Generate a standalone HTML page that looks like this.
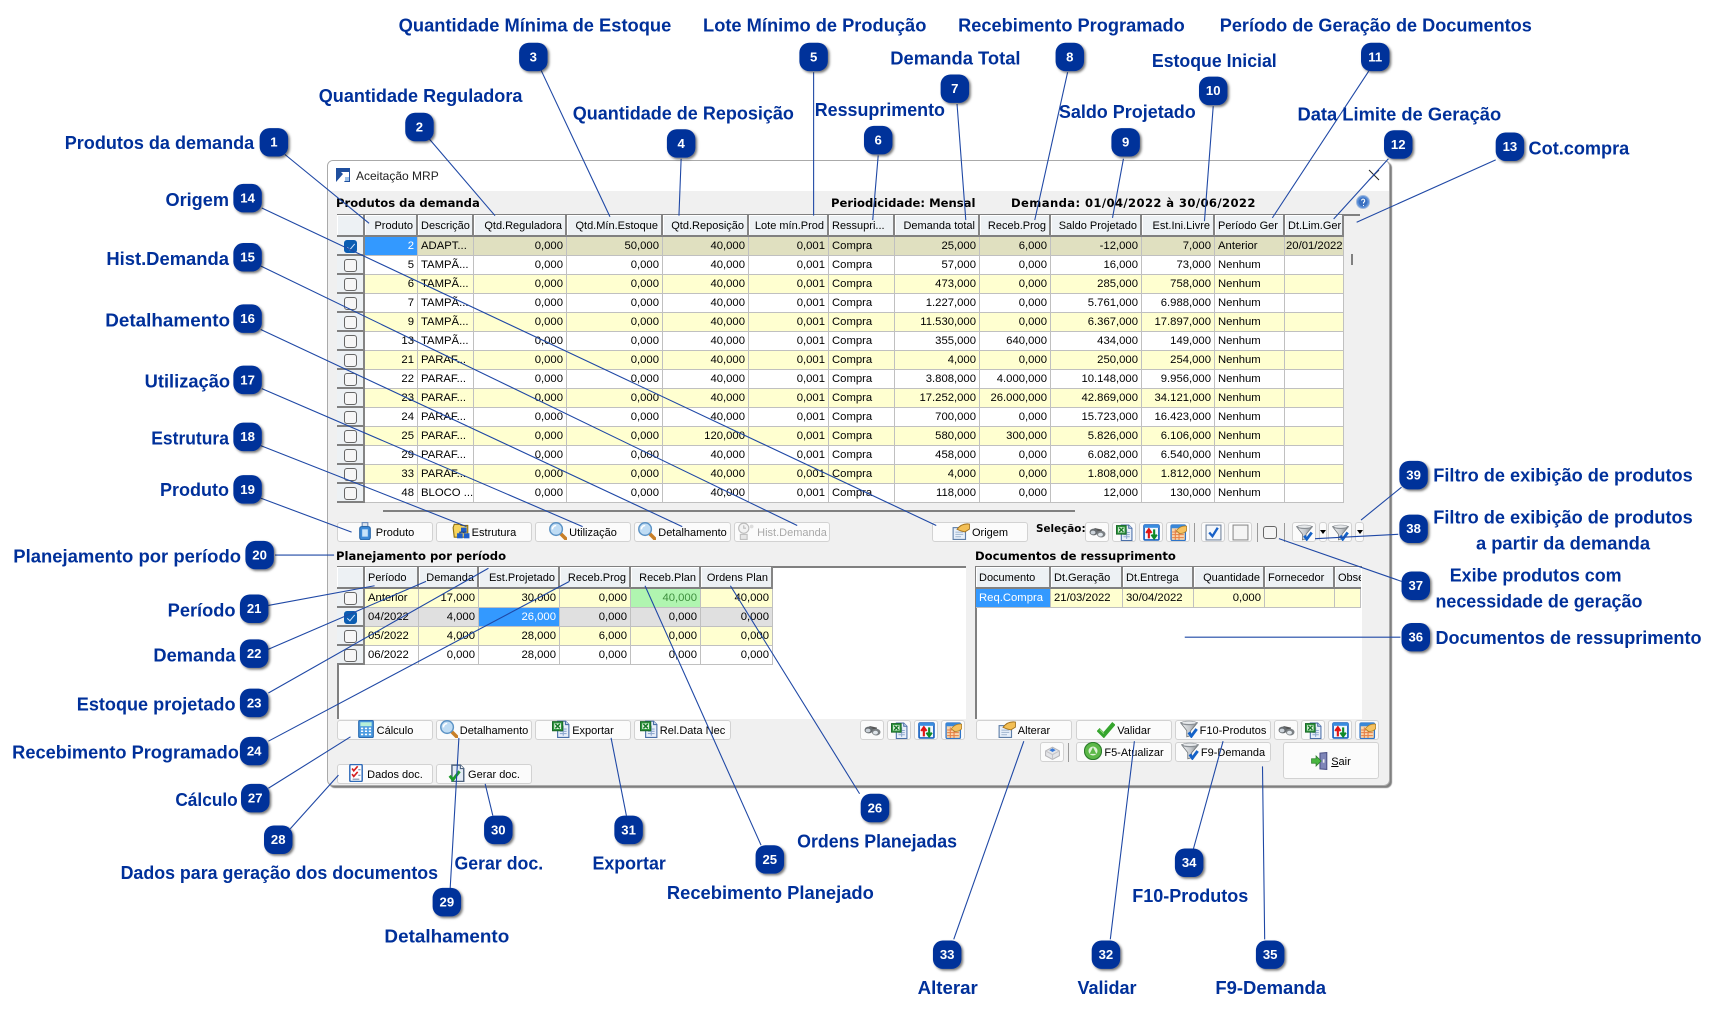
<!DOCTYPE html>
<html lang="pt">
<head>
<meta charset="utf-8">
<title>Aceitação MRP</title>
<style>
html,body{margin:0;padding:0;background:#fff;width:1717px;height:1016px;overflow:hidden}
*{box-sizing:border-box}
body{font-family:"Liberation Sans",sans-serif;font-size:11.3px;color:#000;position:relative}
#win{position:absolute;left:327px;top:160px;width:1063px;height:626px;background:#f0f0f0;border:1px solid #aaa;border-radius:6px;box-shadow:2px 2px 1px #808080;overflow:hidden}
#titlebar{position:absolute;left:0;top:0;width:100%;height:30px;background:#fff}
.abs{position:absolute}
.h{position:absolute;font-family:"DejaVu Sans",sans-serif;font-weight:bold;font-size:11.6px;white-space:nowrap;line-height:14px}
table{position:absolute;border-collapse:separate;border-spacing:0;table-layout:fixed}
th,td{padding:0 3px;font-weight:normal;white-space:nowrap;overflow:hidden;border-right:1px solid #c0c0c0;border-bottom:1px solid #c0c0c0;text-align:left;font-size:11.3px}
th{background:#edf1f4;border-right:2px solid #858585;border-bottom:2px solid #808080;box-shadow:inset 1px 1px #fff;height:22px;padding:1px 3px 0;font-size:11px}
td{height:19px;line-height:17px;padding-top:1px}
.r{text-align:right}
.y td{background:#ffffd0}
.w td{background:#fff}
.s td{background:#e0e0c0}
.g td{background:#e0e0e0}
td.c,td.c:first-child{background:#edf1f4;border-right:2px solid #858585;border-bottom:2px solid #808080;padding:0;text-align:center}
td.b,.s td.b,.g td.b{background:#3399ff;color:#fff}
td.pl{background:#b0f5b0;color:#3d8f3d}
.k{display:block;width:13px;height:13px;margin:1px auto 0;border:1px solid #666;border-radius:3px;background:#f6f6f6;position:relative}
.k.on{background:#0b5db2;border-color:#0b5db2}
.k.on::after{content:"";position:absolute;left:4px;top:1px;width:3px;height:7px;border:solid #cfe3ff;border-width:0 1px 1px 0;transform:rotate(40deg)}
.p{position:absolute;background:#fff}
.bt{position:absolute;height:20px;background:#fbfbfb;border:1px solid #d2d2d2;border-radius:3px;display:flex;align-items:center;justify-content:center;gap:2px;font-size:11px;white-space:nowrap;color:#000;padding-top:2px}
.bt svg{width:18px;height:18px;flex:none;margin-top:-5px;overflow:visible}
.ib{padding-top:0}
.ib svg{width:17px;height:17px;margin-top:0}
.dis{color:#a8a8a8}
.sep{position:absolute;width:1px;height:19px;background:#9a9a9a}
</style>
</head>
<body>
<svg width="0" height="0" style="position:absolute">
<defs>
<linearGradient id="sv" x1="0" x2="1" y1="0" y2="0"><stop offset="0" stop-color="#f2f3f4"/><stop offset=".55" stop-color="#c4c8cc"/><stop offset="1" stop-color="#7f8488"/></linearGradient>
<symbol id="bin" viewBox="0 0 16 16"><path d="M5 5l7 1.500" stroke="#555" stroke-width="2.500"/><ellipse cx="4.500" cy="7.500" rx="4" ry="3.200" fill="#676c70"/><ellipse cx="11.500" cy="9.500" rx="4" ry="3.200" fill="#7b8084"/><ellipse cx="3.800" cy="8" rx="2.300" ry="1.800" fill="#ccd3da"/><ellipse cx="10.800" cy="10" rx="2.300" ry="1.800" fill="#dfe5ea"/></symbol>
<symbol id="xl" viewBox="0 0 16 16"><path d="M5 1h7l3 3v11.500H5z" fill="#e8effa" stroke="#4a6fa8"/><path d="M7 8h6M7 10h6M7 12h6M10 5v9" stroke="#8ea9d0"/><path d="M12 1v3h3" fill="#cfdcf0" stroke="#4a6fa8"/><rect x="0.500" y="1.500" width="9" height="8" fill="#2f9a3f" stroke="#1c6a2a"/><rect x="2" y="3" width="6" height="5" fill="#e6f3e4"/><path d="M3 3.500l4 4M7 3.500l-4 4" stroke="#177a28" stroke-width="1.300"/></symbol>
<symbol id="ud" viewBox="0 0 16 16"><rect x="1" y="1" width="14" height="14" rx="1" fill="#f2f8ff" stroke="#1a62c0" stroke-width="1.600"/><rect x="1" y="1" width="14" height="2.600" fill="#3a8ee0"/><path d="M5.500 13.500V6M3 8.500l2.500-3.500 2.500 3.500" stroke="#e01414" stroke-width="2" fill="none"/><path d="M10.500 5v8M8 10l2.500 3.500L13 10" stroke="#0f8a28" stroke-width="2" fill="none"/></symbol>
<symbol id="tbl" viewBox="0 0 16 16"><rect x="1" y="1" width="13.500" height="14.500" rx="1" fill="#f8d6ad" stroke="#2e74c8" stroke-width="1.200"/><rect x="1" y="1" width="13.500" height="3" fill="#3a88d8"/><path d="M2 7.500h11M2 10h11M2 12.800h11M5 5v10M8.500 5v10" stroke="#e67f45"/><path d="M6 6.500c2-3.500 6-5 9.700-4.500v4.500l-3 2-3.500 0.500z" fill="#f6c260" stroke="#a87a22" stroke-width=".7"/></symbol>
<symbol id="fn" viewBox="0 0 16 16"><path d="M0.500 2.500L6 9.500V15l3.500-1V9.500L15.500 2.500z" fill="url(#sv)" stroke="#6f7478" stroke-width=".7"/><ellipse cx="8" cy="2.700" rx="7.500" ry="2" fill="#8a8f94"/><ellipse cx="8" cy="2.400" rx="6" ry="1.200" fill="#e8eaec"/><path d="M7.800 11l2.300 3.300 4.700-6.300" stroke="#1462c8" stroke-width="2.600" fill="none"/></symbol>
<symbol id="mag" viewBox="0 0 16 16"><path d="M10 10l5 5" stroke="#c87f28" stroke-width="3.200" stroke-linecap="round"/><circle cx="6.300" cy="6.300" r="5.600" fill="#bfdcf4" stroke="#5d93c5" stroke-width="1.300"/><path d="M3 6.500a3.400 3.400 0 0 1 3.400-3.400" stroke="#fff" stroke-width="1.400" fill="none"/></symbol>
<symbol id="prod" viewBox="0 0 16 16"><rect x="5.500" y="0.500" width="5" height="3.500" fill="#dfe6ee" stroke="#6f8db8"/><rect x="3.300" y="4" width="9.400" height="11.800" rx="2" fill="#3c8ad8" stroke="#2766a8"/><rect x="5.500" y="6.500" width="5" height="6.500" fill="#c8e4fa"/></symbol>
<symbol id="est" viewBox="0 0 16 16"><path d="M1 5l1-3h5l1 1h6v10.500H2z" fill="#f6d45e" stroke="#8f7010"/><rect x="8" y="5" width="5" height="4" fill="#1f5ec8"/><rect x="4.500" y="10" width="5" height="4.500" fill="#1f5ec8"/><rect x="10.500" y="10" width="5" height="4.500" fill="#1f5ec8"/><path d="M10.500 9v1M7 10V9h6" stroke="#123c88" fill="none"/></symbol>
<symbol id="hand" viewBox="0 0 16 16"><rect x="1" y="5" width="11" height="10.500" fill="#e8f0fa" stroke="#5f7fa8"/><path d="M3 9h7M3 11h7M3 13h5" stroke="#a8bcd4"/><path d="M4.500 6.500C7 3 11 1.200 15.500 1.800v4.500l-4 2.500-3.500-.8z" fill="#f3bf55" stroke="#a0701c" stroke-width=".8"/></symbol>
<symbol id="hist" viewBox="0 0 16 16"><circle cx="6" cy="5.500" r="4.500" fill="#f2f2f2" stroke="#bbb"/><path d="M6 3v2.500h2" stroke="#bbb" fill="none"/><path d="M3 11h6v4.500H3z" fill="#e6e6e6" stroke="#c0c0c0"/><circle cx="13" cy="4" r="1.700" fill="#ddd"/></symbol>
<symbol id="calc" viewBox="0 0 16 16"><rect x="1.500" y="0.500" width="13" height="15" rx="1" fill="#4a9ae0" stroke="#2a6ab0"/><rect x="3" y="2" width="10" height="3.500" fill="#b8f0d8"/><path d="M3.500 7.500h2M7 7.500h2M10.500 7.500h2M3.500 10h2M7 10h2M10.500 10h2M3.500 12.800h2M7 12.800h2M10.500 12.800h2" stroke="#fff" stroke-width="1.400"/></symbol>
<symbol id="dados" viewBox="0 0 16 16"><rect x="2.500" y="0.500" width="11" height="15" rx="1" fill="#fff" stroke="#2f6ab8" stroke-width="1.300"/><path d="M4.500 4l1.500 2 3.500-4M4.500 9l1.500 2 3.500-4" stroke="#d42020" stroke-width="1.500" fill="none"/><path d="M10 5h2M10 10h2M5 13.500h6" stroke="#7a8ea8"/></symbol>
<symbol id="gerar" viewBox="0 0 16 16"><path d="M3.500 1h7.500l3 3v11.500H3.500z" fill="#e4ebf4" stroke="#4f6480" stroke-width="1.300"/><path d="M11 1v3h3" fill="#fff" stroke="#4f6480"/><path d="M1.500 10.500l2.800 3.500 6-7.500" stroke="#1c9a2a" stroke-width="2.500" fill="none"/></symbol>
<symbol id="chk" viewBox="0 0 16 16"><path d="M1 8.500l5 5L15 3" stroke="#35a52e" stroke-width="3.800" fill="none"/><path d="M2.500 8.500l3.500 3.500" stroke="#8fd87a" fill="none"/></symbol>
<symbol id="rec" viewBox="0 0 16 16"><circle cx="8" cy="8" r="7.600" fill="#5cb848" stroke="#2c7d2c"/><circle cx="8" cy="8" r="4" fill="#dff2d6"/><path d="M8 4.500L11 10.500H5z" fill="#5cb848"/></symbol>
<symbol id="sair" viewBox="0 0 16 16"><path d="M8 1l6-0.500v15L8 15z" fill="#7f86b8" stroke="#4e5488"/><rect x="10.500" y="6.500" width="1.500" height="3" fill="#eee"/><path d="M0.500 6h4V3.500L9 8l-4.500 4.500V10h-4z" fill="#49b640" stroke="#2c7d2c" stroke-width="0.700"/></symbol>
<symbol id="box" viewBox="0 0 16 16"><path d="M1.500 6.500L8 3l6.500 3.500v4.500L8 14.500 1.500 11z" fill="#e4e5e8" stroke="#b4b4b8"/><path d="M1.500 6.500L8 10l6.500-3.500M8 10v4.500" stroke="#c4c4c8" fill="none"/><path d="M5 5.800L8 4l3 1.800L8 7.500z" fill="#3a7ad8"/></symbol>
<symbol id="vk" viewBox="0 0 16 16"><rect x="1" y="1" width="14" height="14" fill="#f4f7fb" stroke="#70839c"/><path d="M4 8l3 3.500 5-8" stroke="#1660c8" stroke-width="2.200" fill="none"/></symbol>
<symbol id="ev" viewBox="0 0 16 16"><rect x="1" y="1" width="14" height="14" fill="#f4f4f4" stroke="#8a8a8a"/></symbol>
</defs>
</svg>

<div id="win">
<div id="titlebar"></div>
</div>

<svg class="abs" style="left:336px;top:168px" width="14" height="14" viewBox="0 0 14 14"><rect width="14" height="14" fill="#1f4f9e"/><path d="M0 14L7 6 5 4h8v8l-2-2-3 4z" fill="#fff"/><rect x="9" y="9" width="4" height="4" fill="#9cc0e8"/></svg>
<div class="abs" style="left:356px;top:169px;font-size:12px;line-height:15px;white-space:nowrap;color:#222">Aceitação MRP</div>

<svg class="abs" style="left:1368px;top:169px" width="12" height="12" viewBox="0 0 12 12"><path d="M1 1l10 10M11 1L1 11" stroke="#222" stroke-width="1"/></svg>
<svg class="abs" style="left:1356px;top:195px" width="14" height="14" viewBox="0 0 14 14"><circle cx="7" cy="7" r="6.500" fill="#5b8fd8" stroke="#9fb8dc"/><circle cx="7" cy="7" r="4.500" fill="#3a70c0"/><path d="M5.500 5.500a1.600 1.600 0 1 1 2 1.800V8.500M7.500 10v1" stroke="#fff" fill="none"/></svg>

<div class="h" style="left:336px;top:196px">Produtos da demanda</div>
<div class="h" style="left:831px;top:196px">Periodicidade: Mensal</div>
<div class="h" style="left:1011px;top:196px;letter-spacing:.39px">Demanda: 01/04/2022 à 30/06/2022</div>

<div class="abs" style="left:337px;top:214px;width:1023px;height:2px;background:#808080"></div>
<div class="abs" style="left:337px;top:214px;width:2px;height:288px;background:#808080"></div>

<table style="left:337px;top:215px;width:1007px">
<colgroup><col style="width:28px"><col style="width:53px"><col style="width:56px"><col style="width:93px"><col style="width:96px"><col style="width:86px"><col style="width:80px"><col style="width:66px"><col style="width:85px"><col style="width:71px"><col style="width:91px"><col style="width:73px"><col style="width:70px"><col style="width:59px"></colgroup>
<tr><th></th><th class="r">Produto</th><th>Descrição</th><th class="r">Qtd.Reguladora</th><th class="r">Qtd.Mín.Estoque</th><th class="r">Qtd.Reposição</th><th class="r">Lote mín.Prod</th><th>Ressupri...</th><th class="r">Demanda total</th><th class="r">Receb.Prog</th><th class="r">Saldo Projetado</th><th class="r">Est.Ini.Livre</th><th>Período Ger</th><th>Dt.Lim.Ger</th></tr>
<tr class="s"><td class="c"><span class="k on"></span></td><td class="r b">2</td><td>ADAPT...</td><td class="r">0,000</td><td class="r">50,000</td><td class="r">40,000</td><td class="r">0,001</td><td>Compra</td><td class="r">25,000</td><td class="r">6,000</td><td class="r">-12,000</td><td class="r">7,000</td><td>Anterior</td><td style="padding:1px 0 0 1px">20/01/2022</td></tr>
<tr class="w"><td class="c"><span class="k"></span></td><td class="r">5</td><td>TAMPÃ...</td><td class="r">0,000</td><td class="r">0,000</td><td class="r">40,000</td><td class="r">0,001</td><td>Compra</td><td class="r">57,000</td><td class="r">0,000</td><td class="r">16,000</td><td class="r">73,000</td><td>Nenhum</td><td></td></tr>
<tr class="y"><td class="c"><span class="k"></span></td><td class="r">6</td><td>TAMPÃ...</td><td class="r">0,000</td><td class="r">0,000</td><td class="r">40,000</td><td class="r">0,001</td><td>Compra</td><td class="r">473,000</td><td class="r">0,000</td><td class="r">285,000</td><td class="r">758,000</td><td>Nenhum</td><td></td></tr>
<tr class="w"><td class="c"><span class="k"></span></td><td class="r">7</td><td>TAMPÃ...</td><td class="r">0,000</td><td class="r">0,000</td><td class="r">40,000</td><td class="r">0,001</td><td>Compra</td><td class="r">1.227,000</td><td class="r">0,000</td><td class="r">5.761,000</td><td class="r">6.988,000</td><td>Nenhum</td><td></td></tr>
<tr class="y"><td class="c"><span class="k"></span></td><td class="r">9</td><td>TAMPÃ...</td><td class="r">0,000</td><td class="r">0,000</td><td class="r">40,000</td><td class="r">0,001</td><td>Compra</td><td class="r">11.530,000</td><td class="r">0,000</td><td class="r">6.367,000</td><td class="r">17.897,000</td><td>Nenhum</td><td></td></tr>
<tr class="w"><td class="c"><span class="k"></span></td><td class="r">13</td><td>TAMPÃ...</td><td class="r">0,000</td><td class="r">0,000</td><td class="r">40,000</td><td class="r">0,001</td><td>Compra</td><td class="r">355,000</td><td class="r">640,000</td><td class="r">434,000</td><td class="r">149,000</td><td>Nenhum</td><td></td></tr>
<tr class="y"><td class="c"><span class="k"></span></td><td class="r">21</td><td>PARAF...</td><td class="r">0,000</td><td class="r">0,000</td><td class="r">40,000</td><td class="r">0,001</td><td>Compra</td><td class="r">4,000</td><td class="r">0,000</td><td class="r">250,000</td><td class="r">254,000</td><td>Nenhum</td><td></td></tr>
<tr class="w"><td class="c"><span class="k"></span></td><td class="r">22</td><td>PARAF...</td><td class="r">0,000</td><td class="r">0,000</td><td class="r">40,000</td><td class="r">0,001</td><td>Compra</td><td class="r">3.808,000</td><td class="r">4.000,000</td><td class="r">10.148,000</td><td class="r">9.956,000</td><td>Nenhum</td><td></td></tr>
<tr class="y"><td class="c"><span class="k"></span></td><td class="r">23</td><td>PARAF...</td><td class="r">0,000</td><td class="r">0,000</td><td class="r">40,000</td><td class="r">0,001</td><td>Compra</td><td class="r">17.252,000</td><td class="r">26.000,000</td><td class="r">42.869,000</td><td class="r">34.121,000</td><td>Nenhum</td><td></td></tr>
<tr class="w"><td class="c"><span class="k"></span></td><td class="r">24</td><td>PARAF...</td><td class="r">0,000</td><td class="r">0,000</td><td class="r">40,000</td><td class="r">0,001</td><td>Compra</td><td class="r">700,000</td><td class="r">0,000</td><td class="r">15.723,000</td><td class="r">16.423,000</td><td>Nenhum</td><td></td></tr>
<tr class="y"><td class="c"><span class="k"></span></td><td class="r">25</td><td>PARAF...</td><td class="r">0,000</td><td class="r">0,000</td><td class="r">120,000</td><td class="r">0,001</td><td>Compra</td><td class="r">580,000</td><td class="r">300,000</td><td class="r">5.826,000</td><td class="r">6.106,000</td><td>Nenhum</td><td></td></tr>
<tr class="w"><td class="c"><span class="k"></span></td><td class="r">29</td><td>PARAF...</td><td class="r">0,000</td><td class="r">0,000</td><td class="r">40,000</td><td class="r">0,001</td><td>Compra</td><td class="r">458,000</td><td class="r">0,000</td><td class="r">6.082,000</td><td class="r">6.540,000</td><td>Nenhum</td><td></td></tr>
<tr class="y"><td class="c"><span class="k"></span></td><td class="r">33</td><td>PARAF...</td><td class="r">0,000</td><td class="r">0,000</td><td class="r">40,000</td><td class="r">0,001</td><td>Compra</td><td class="r">4,000</td><td class="r">0,000</td><td class="r">1.808,000</td><td class="r">1.812,000</td><td>Nenhum</td><td></td></tr>
<tr class="w"><td class="c"><span class="k"></span></td><td class="r">48</td><td>BLOCO ...</td><td class="r">0,000</td><td class="r">0,000</td><td class="r">40,000</td><td class="r">0,001</td><td>Compra</td><td class="r">118,000</td><td class="r">0,000</td><td class="r">12,000</td><td class="r">130,000</td><td>Nenhum</td><td></td></tr>
</table>

<div class="abs" style="left:1351px;top:254px;width:2px;height:11px;background:#808080"></div>
<div class="abs" style="left:383px;top:510px;width:692px;height:2px;background:#808080"></div>

<div class="bt" style="left:337px;top:522px;width:96px"><svg><use href="#prod"/></svg>Produto</div>
<div class="bt" style="left:436px;top:522px;width:96px"><svg><use href="#est"/></svg>Estrutura</div>
<div class="bt" style="left:535px;top:522px;width:96px"><svg><use href="#mag"/></svg>Utilização</div>
<div class="bt" style="left:634px;top:522px;width:97px"><svg><use href="#mag"/></svg>Detalhamento</div>
<div class="bt dis" style="left:734px;top:522px;width:96px"><svg><use href="#hist"/></svg>Hist.Demanda</div>
<div class="bt" style="left:932px;top:522px;width:96px"><svg><use href="#hand"/></svg>Origem</div>

<div class="h" style="left:1036px;top:522px;font-size:10.4px">Seleção:</div>
<div class="bt ib" style="left:1085px;top:522px;width:24px"><svg><use href="#bin"/></svg></div>
<div class="bt ib" style="left:1112px;top:522px;width:24px"><svg><use href="#xl"/></svg></div>
<div class="bt ib" style="left:1139px;top:522px;width:24px"><svg><use href="#ud"/></svg></div>
<div class="bt ib" style="left:1166px;top:522px;width:24px"><svg><use href="#tbl"/></svg></div>
<div class="sep" style="left:1194px;top:523px"></div>
<div class="bt ib" style="left:1201px;top:522px;width:24px"><svg><use href="#vk"/></svg></div>
<div class="bt ib" style="left:1228px;top:522px;width:24px"><svg><use href="#ev"/></svg></div>
<div class="sep" style="left:1257px;top:523px"></div>
<div class="abs" style="left:1263px;top:526px;width:14px;height:13px;border:1px solid #666;border-radius:3px;background:#f4f4f4"></div>
<div class="sep" style="left:1284px;top:523px"></div>
<div class="bt ib" style="left:1292px;top:522px;width:24px"><svg><use href="#fn"/></svg></div>
<div class="bt ib" style="left:1319px;top:522px;width:8px"><span style="border:3px solid transparent;border-top:4px solid #000;border-bottom:0"></span></div>
<div class="bt ib" style="left:1328px;top:522px;width:24px"><svg><use href="#fn"/></svg></div>
<div class="bt ib" style="left:1355px;top:522px;width:9px"><span style="border:3px solid transparent;border-top:4px solid #000;border-bottom:0"></span></div>

<div class="h" style="left:336px;top:549px">Planejamento por período</div>
<div class="h" style="left:975px;top:549px">Documentos de ressuprimento</div>

<div class="p" style="left:337px;top:566px;width:629px;height:153px"></div>
<div class="abs" style="left:337px;top:566px;width:629px;height:2px;background:#808080"></div>
<div class="abs" style="left:337px;top:566px;width:2px;height:153px;background:#808080"></div>
<table style="left:337px;top:567px;width:436px">
<colgroup><col style="width:28px"><col style="width:54px"><col style="width:60px"><col style="width:81px"><col style="width:71px"><col style="width:70px"><col style="width:72px"></colgroup>
<tr><th></th><th>Período</th><th class="r">Demanda</th><th class="r">Est.Projetado</th><th class="r">Receb.Prog</th><th class="r">Receb.Plan</th><th class="r">Ordens Plan</th></tr>
<tr class="y"><td class="c"><span class="k"></span></td><td>Anterior</td><td class="r">17,000</td><td class="r">30,000</td><td class="r">0,000</td><td class="r pl">40,000</td><td class="r">40,000</td></tr>
<tr class="g"><td class="c"><span class="k on"></span></td><td>04/2022</td><td class="r">4,000</td><td class="r b">26,000</td><td class="r">0,000</td><td class="r">0,000</td><td class="r">0,000</td></tr>
<tr class="y"><td class="c"><span class="k"></span></td><td>05/2022</td><td class="r">4,000</td><td class="r">28,000</td><td class="r">6,000</td><td class="r">0,000</td><td class="r">0,000</td></tr>
<tr class="w"><td class="c"><span class="k"></span></td><td>06/2022</td><td class="r">0,000</td><td class="r">28,000</td><td class="r">0,000</td><td class="r">0,000</td><td class="r">0,000</td></tr>
</table>

<div class="p" style="left:975px;top:566px;width:387px;height:153px"></div>
<div class="abs" style="left:975px;top:566px;width:387px;height:2px;background:#808080"></div>
<div class="abs" style="left:975px;top:566px;width:2px;height:153px;background:#808080"></div>
<table style="left:976px;top:567px;width:385px">
<colgroup><col style="width:75px"><col style="width:72px"><col style="width:71px"><col style="width:71px"><col style="width:70px"><col style="width:26px"></colgroup>
<tr><th>Documento</th><th>Dt.Geração</th><th>Dt.Entrega</th><th class="r">Quantidade</th><th>Fornecedor</th><th style="border-right:0">Obse</th></tr>
<tr class="y"><td class="b">Req.Compra</td><td>21/03/2022</td><td>30/04/2022</td><td class="r">0,000</td><td></td><td></td></tr>
</table>

<div class="bt" style="left:337px;top:720px;width:96px"><svg><use href="#calc"/></svg>Cálculo</div>
<div class="bt" style="left:436px;top:720px;width:96px"><svg><use href="#mag"/></svg>Detalhamento</div>
<div class="bt" style="left:535px;top:720px;width:96px"><svg><use href="#xl"/></svg>Exportar</div>
<div class="bt" style="left:634px;top:720px;width:97px"><svg><use href="#xl"/></svg>Rel.Data Nec</div>
<div class="bt" style="left:337px;top:764px;width:96px"><svg><use href="#dados"/></svg>Dados doc.</div>
<div class="bt" style="left:436px;top:764px;width:96px"><svg><use href="#gerar"/></svg>Gerar doc.</div>

<div class="bt ib" style="left:860px;top:720px;width:24px"><svg><use href="#bin"/></svg></div>
<div class="bt ib" style="left:887px;top:720px;width:24px"><svg><use href="#xl"/></svg></div>
<div class="bt ib" style="left:914px;top:720px;width:24px"><svg><use href="#ud"/></svg></div>
<div class="bt ib" style="left:941px;top:720px;width:24px"><svg><use href="#tbl"/></svg></div>

<div class="bt" style="left:976px;top:720px;width:96px"><svg><use href="#hand"/></svg>Alterar</div>
<div class="bt" style="left:1076px;top:720px;width:96px"><svg><use href="#chk"/></svg>Validar</div>
<div class="bt" style="left:1175px;top:720px;width:96px"><svg><use href="#fn"/></svg>F10-Produtos</div>
<div class="bt ib" style="left:1274px;top:720px;width:24px"><svg><use href="#bin"/></svg></div>
<div class="bt ib" style="left:1301px;top:720px;width:24px"><svg><use href="#xl"/></svg></div>
<div class="bt ib" style="left:1328px;top:720px;width:24px"><svg><use href="#ud"/></svg></div>
<div class="bt ib" style="left:1355px;top:720px;width:24px"><svg><use href="#tbl"/></svg></div>

<div class="bt ib" style="left:1040px;top:742px;width:24px"><svg><use href="#box"/></svg></div>
<div class="sep" style="left:1068px;top:743px"></div>
<div class="bt" style="left:1076px;top:742px;width:96px"><svg><use href="#rec"/></svg>F5-Atualizar</div>
<div class="bt" style="left:1175px;top:742px;width:96px"><svg><use href="#fn"/></svg>F9-Demanda</div>
<div class="bt" style="left:1283px;top:742px;width:96px;height:37px"><svg style="margin-top:-2px"><use href="#sair"/></svg><span><u>S</u>air</span></div>

<svg class="abs" style="left:0;top:0" width="1717" height="1016" viewBox="0 0 1568 928">
<defs><filter id="sh" x="-30%" y="-30%" width="170%" height="170%"><feDropShadow dx="1.500" dy="1.500" stdDeviation="1.200" flood-color="#000" flood-opacity=".55"/></filter></defs>
<g stroke="#1f48a5" stroke-width="1" fill="none">
<path d="M260 141L337 204M392 127L452 197M494 64L557 198M622 145L620 197M743 66L743 197M802 142L797 201M874 95L882 201M975 66L945 201M1026 145L1016 199M1108 97L1100 202M1250 65L1162 199M1268 145L1218 200M1366 146L1239 203"/>
<path d="M239 190L855 480M238 243L728 480M238 301L623 481M239 355L532 481M238 407L426 481M238 455L321 486M251 507L305 507M245 553L342 535M245 593L389 531M245 633L446 519M245 677L520 531"/>
<path d="M695 772L589 535M785 725L667 535M245 720L320 673M265 757L309 708M411 812L419 674M450 745L443 716M572 745L558 674M1014 858L1036 677M871 858L935 677M1090 775L1117 677M1155 858L1153 700M1279 582L1082 582M1280 531L1168 492M1277 488L1201 492M1280 445L1243 475"/>
</g>
<g fill="#00309a" filter="url(#sh)">
<rect x="237" y="117" width="26" height="26" rx="9"/><rect x="370" y="103" width="26" height="26" rx="9"/><rect x="474" y="39" width="26" height="26" rx="9"/><rect x="609" y="118" width="26" height="26" rx="9"/><rect x="730" y="39" width="26" height="26" rx="9"/><rect x="789" y="115" width="26" height="26" rx="9"/><rect x="859" y="68" width="26" height="26" rx="9"/><rect x="964" y="39" width="26" height="26" rx="9"/><rect x="1015" y="117" width="26" height="26" rx="9"/><rect x="1095" y="70" width="26" height="26" rx="9"/><rect x="1243" y="39" width="26" height="26" rx="9"/><rect x="1264" y="119" width="26" height="26" rx="9"/><rect x="1366" y="121" width="26" height="26" rx="9"/>
<rect x="213" y="168" width="26" height="26" rx="9"/><rect x="213" y="222" width="26" height="26" rx="9"/><rect x="213" y="278" width="26" height="26" rx="9"/><rect x="213" y="334" width="26" height="26" rx="9"/><rect x="213" y="386" width="26" height="26" rx="9"/><rect x="213" y="434" width="26" height="26" rx="9"/><rect x="224" y="494" width="26" height="26" rx="9"/><rect x="219" y="543" width="26" height="26" rx="9"/><rect x="219" y="584" width="26" height="26" rx="9"/><rect x="219" y="629" width="26" height="26" rx="9"/><rect x="219" y="673" width="26" height="26" rx="9"/>
<rect x="690" y="772" width="26" height="26" rx="9"/><rect x="786" y="725" width="26" height="26" rx="9"/><rect x="220" y="716" width="26" height="26" rx="9"/><rect x="241" y="754" width="26" height="26" rx="9"/><rect x="395" y="811" width="26" height="26" rx="9"/><rect x="442" y="745" width="26" height="26" rx="9"/><rect x="561" y="745" width="26" height="26" rx="9"/><rect x="997" y="859" width="26" height="26" rx="9"/><rect x="852" y="859" width="26" height="26" rx="9"/><rect x="1073" y="775" width="26" height="26" rx="9"/><rect x="1147" y="859" width="26" height="26" rx="9"/><rect x="1280" y="569" width="26" height="26" rx="9"/><rect x="1280" y="522" width="26" height="26" rx="9"/><rect x="1278" y="470" width="26" height="26" rx="9"/><rect x="1278" y="421" width="26" height="26" rx="9"/>
</g>
<g fill="#fff" font-family="Liberation Sans, sans-serif" font-weight="bold" font-size="12" text-anchor="middle">
<text x="250" y="134">1</text><text x="383" y="120">2</text><text x="487" y="56">3</text><text x="622" y="135">4</text><text x="743" y="56">5</text><text x="802" y="132">6</text><text x="872" y="85">7</text><text x="977" y="56">8</text><text x="1028" y="134">9</text><text x="1108" y="87">10</text><text x="1256" y="56">11</text><text x="1277" y="136">12</text><text x="1379" y="138">13</text>
<text x="226" y="185">14</text><text x="226" y="239">15</text><text x="226" y="295">16</text><text x="226" y="351">17</text><text x="226" y="403">18</text><text x="226" y="451">19</text><text x="237" y="511">20</text><text x="232" y="560">21</text><text x="232" y="601">22</text><text x="232" y="646">23</text><text x="232" y="690">24</text>
<text x="703" y="789">25</text><text x="799" y="742">26</text><text x="233" y="733">27</text><text x="254" y="771">28</text><text x="408" y="828">29</text><text x="455" y="762">30</text><text x="574" y="762">31</text><text x="1010" y="876">32</text><text x="865" y="876">33</text><text x="1086" y="792">34</text><text x="1160" y="876">35</text><text x="1293" y="586">36</text><text x="1293" y="539">37</text><text x="1291" y="487">38</text><text x="1291" y="438">39</text>
</g>
<g fill="#00309a" font-family="Liberation Sans, sans-serif" font-weight="bold" font-size="16.500">
<text x="364" y="29" textLength="249" lengthAdjust="spacingAndGlyphs">Quantidade Mínima de Estoque</text>
<text x="642" y="29" textLength="204" lengthAdjust="spacingAndGlyphs">Lote Mínimo de Produção</text>
<text x="875" y="29" textLength="207" lengthAdjust="spacingAndGlyphs">Recebimento Programado</text>
<text x="1114" y="29" textLength="285" lengthAdjust="spacingAndGlyphs">Período de Geração de Documentos</text>
<text x="813" y="59" textLength="119" lengthAdjust="spacingAndGlyphs">Demanda Total</text>
<text x="1052" y="61" textLength="114" lengthAdjust="spacingAndGlyphs">Estoque Inicial</text>
<text x="291" y="93" textLength="186" lengthAdjust="spacingAndGlyphs">Quantidade Reguladora</text>
<text x="523" y="109" textLength="202" lengthAdjust="spacingAndGlyphs">Quantidade de Reposição</text>
<text x="744" y="106" textLength="119" lengthAdjust="spacingAndGlyphs">Ressuprimento</text>
<text x="967" y="108" textLength="125" lengthAdjust="spacingAndGlyphs">Saldo Projetado</text>
<text x="1185" y="110" textLength="186" lengthAdjust="spacingAndGlyphs">Data Limite de Geração</text>
<text x="59" y="136" textLength="173" lengthAdjust="spacingAndGlyphs">Produtos da demanda</text>
<text x="1396" y="141" textLength="92" lengthAdjust="spacingAndGlyphs">Cot.compra</text>
<text x="151" y="188" textLength="58" lengthAdjust="spacingAndGlyphs">Origem</text>
<text x="97" y="242" textLength="112" lengthAdjust="spacingAndGlyphs">Hist.Demanda</text>
<text x="96" y="298" textLength="114" lengthAdjust="spacingAndGlyphs">Detalhamento</text>
<text x="132" y="354" textLength="78" lengthAdjust="spacingAndGlyphs">Utilização</text>
<text x="138" y="406" textLength="71" lengthAdjust="spacingAndGlyphs">Estrutura</text>
<text x="146" y="453" textLength="63" lengthAdjust="spacingAndGlyphs">Produto</text>
<text x="12" y="514" textLength="208" lengthAdjust="spacingAndGlyphs">Planejamento por período</text>
<text x="153" y="563" textLength="62" lengthAdjust="spacingAndGlyphs">Período</text>
<text x="140" y="604" textLength="75" lengthAdjust="spacingAndGlyphs">Demanda</text>
<text x="70" y="649" textLength="145" lengthAdjust="spacingAndGlyphs">Estoque projetado</text>
<text x="11" y="693" textLength="207" lengthAdjust="spacingAndGlyphs">Recebimento Programado</text>
<text x="160" y="736" textLength="57" lengthAdjust="spacingAndGlyphs">Cálculo</text>
<text x="110" y="803" textLength="290" lengthAdjust="spacingAndGlyphs">Dados para geração dos documentos</text>
<text x="415" y="794" textLength="81" lengthAdjust="spacingAndGlyphs">Gerar doc.</text>
<text x="541" y="794" textLength="67" lengthAdjust="spacingAndGlyphs">Exportar</text>
<text x="728" y="774" textLength="146" lengthAdjust="spacingAndGlyphs">Ordens Planejadas</text>
<text x="609" y="821" textLength="189" lengthAdjust="spacingAndGlyphs">Recebimento Planejado</text>
<text x="351" y="861" textLength="114" lengthAdjust="spacingAndGlyphs">Detalhamento</text>
<text x="838" y="908" textLength="55" lengthAdjust="spacingAndGlyphs">Alterar</text>
<text x="984" y="908" textLength="54" lengthAdjust="spacingAndGlyphs">Validar</text>
<text x="1034" y="824" textLength="106" lengthAdjust="spacingAndGlyphs">F10-Produtos</text>
<text x="1110" y="908" textLength="101" lengthAdjust="spacingAndGlyphs">F9-Demanda</text>
<text x="1309" y="440" textLength="237" lengthAdjust="spacingAndGlyphs">Filtro de exibição de produtos</text>
<text x="1309" y="478" textLength="237" lengthAdjust="spacingAndGlyphs">Filtro de exibição de produtos</text>
<text x="1348" y="502" textLength="159" lengthAdjust="spacingAndGlyphs">a partir da demanda</text>
<text x="1324" y="531" textLength="157" lengthAdjust="spacingAndGlyphs">Exibe produtos com</text>
<text x="1311" y="555" textLength="189" lengthAdjust="spacingAndGlyphs">necessidade de geração</text>
<text x="1311" y="588" textLength="243" lengthAdjust="spacingAndGlyphs">Documentos de ressuprimento</text>
</g>
</svg>
</body>
</html>
